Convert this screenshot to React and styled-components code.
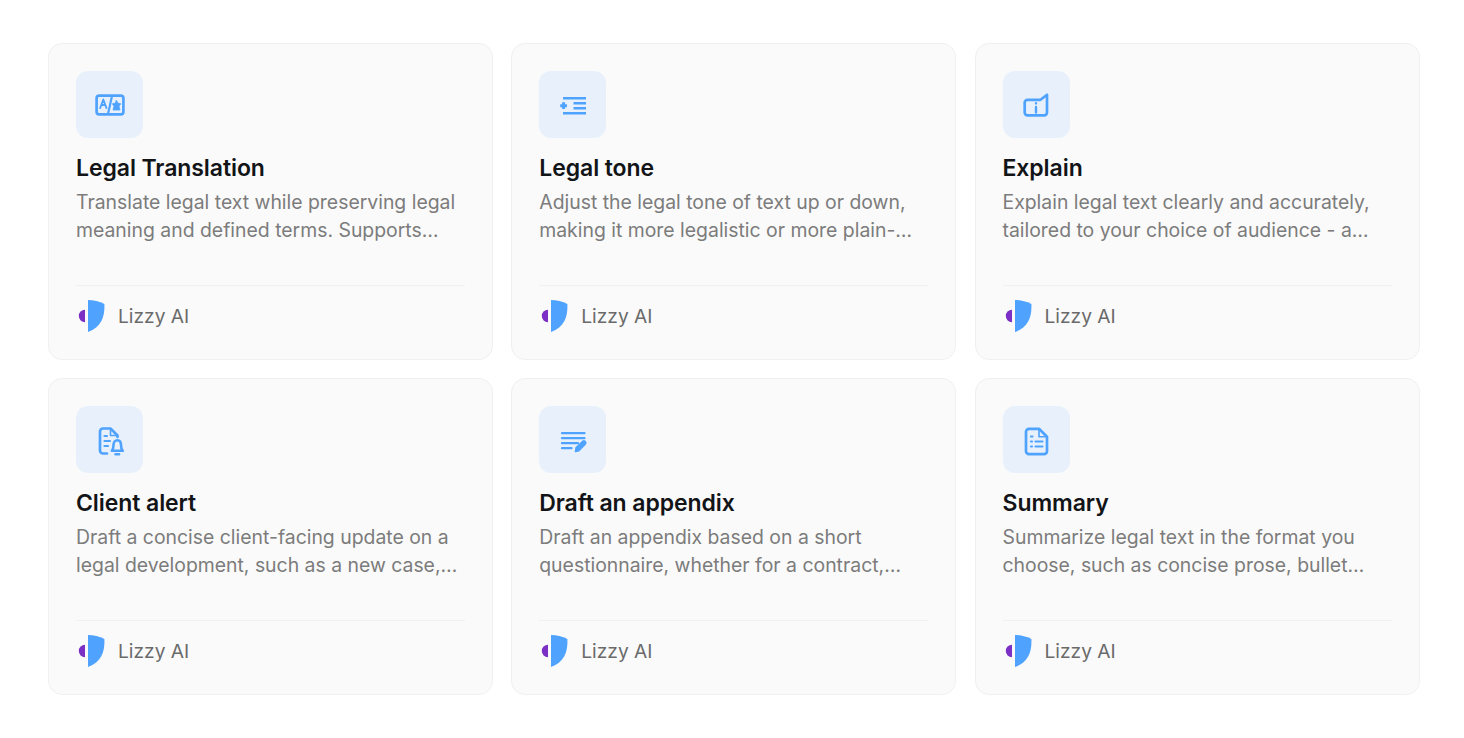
import React from 'react';
import styled, { createGlobalStyle } from 'styled-components';

const GlobalStyle = createGlobalStyle`
  body {
    margin: 0;
    background: #fff;
    font-family: Inter, "Liberation Sans", sans-serif;
  }
`;

const Grid = styled.div`
  display: grid;
  grid-template-columns: repeat(3, 1fr);
  grid-auto-rows: 317px;
  gap: 18px 18.25px;
  padding: 43px 44.5px 0 48px;
`;

const Card = styled.div`
  display: flex;
  flex-direction: column;
  box-sizing: border-box;
  padding: 27px 27px 0;
  background: #fafafa;
  border: 1px solid #f0f0f0;
  border-radius: 14px;
`;

const IconBox = styled.div`
  display: flex;
  align-items: center;
  justify-content: center;
  width: 67px;
  height: 67px;
  background: #e8f1fb;
  border-radius: 12px;
`;

const Title = styled.div`
  margin-top: 16px;
  font-size: 23px;
  line-height: 28px;
  font-weight: 600;
  letter-spacing: -0.08px;
  color: #121417;
`;

const Description = styled.div`
  margin-top: 6px;
  height: 56px;
  font-size: 19.4px;
  line-height: 28px;
  color: #7c7c7c;
`;

const Footer = styled.div`
  display: flex;
  align-items: center;
  gap: 13px;
  margin-top: 41px;
  padding-top: 13px;
  border-top: 1px solid #f1f1f1;
`;

const Author = styled.span`
  font-size: 19.2px;
  line-height: 32px;
  color: #6a6a6a;
`;

const Glyph = styled.svg.attrs((props) => ({
  viewBox: '0 0 32 32',
  fill: 'none',
  strokeWidth: props.$weight || 2.7,
}))`
  width: 32px;
  height: 32px;
  stroke: #4fa3ff;
  stroke-linecap: round;
  stroke-linejoin: round;
`;

const Logo = () => (
  <svg width="29" height="34" viewBox="0 0 29 34">
    <path d="M9 10.8A6.2 6.2 0 0 0 9 23.2Z" fill="#7b2fc4" />
    <path d="M12 1C17.5 1 23.5 2.4 28.4 5C29 18 25 28.5 12 33Z" fill="#4fa3ff" />
  </svg>
);

const TranslateIcon = () => (
  <Glyph>
    <rect x="2.6" y="6.6" width="26.8" height="18.8" rx="2.6" />
    <path d="M18 7L14 25" strokeWidth="2.2" />
    <path d="M6.2 19L9.3 10.5L12.4 19M7.4 16H11.2" strokeWidth="1.9" />
    <path d="M22.5 11.5L24 14.2L26.8 14.8L25 17.2L26 21H19L20 17.2L18.3 14.8L21 14.2Z" fill="#4fa3ff" strokeWidth="0.8" />
  </Glyph>
);

const ToneIcon = () => (
  <Glyph $weight={2.4}>
    <path d="M6 9.2H29M16.5 14.2H29M16.5 19.2H29M6 24.2H29" strokeLinecap="butt" />
    <path d="M3.2 16.7H10M6.6 13.3V20.1" strokeWidth="3" strokeLinecap="butt" />
  </Glyph>
);

const ExplainIcon = () => (
  <Glyph>
    <path d="M7.5 10.8H20.5L27 5.8V23.5A2.8 2.8 0 0 1 24.2 26.3H7.5A2.8 2.8 0 0 1 4.7 23.5V13.6A2.8 2.8 0 0 1 7.5 10.8Z" />
    <path d="M16 18V23.5M16 14.3V14.4" strokeWidth="2.4" />
  </Glyph>
);

const AlertIcon = () => (
  <Glyph>
    <path d="M13 29.5H9A3 3 0 0 1 6 26.5V7.5A3 3 0 0 1 9 4.5H16.5L23.5 11.5V13" />
    <path d="M16.5 5V11.5H23" strokeWidth="1.6" />
    <path d="M10.5 12H13M10.5 17H16M10.5 22H14" strokeWidth="2.2" />
    <path d="M17.8 26.8C19.5 25 19.5 23.5 19.5 21C19.5 18 21.2 16.2 23.3 16.2C25.4 16.2 27 18 27 21C27 23.5 27 25 28.8 26.8Z" strokeWidth="2.6" />
    <path d="M21.6 30.3H25" strokeWidth="2.6" />
  </Glyph>
);

const DraftIcon = () => (
  <Glyph>
    <path d="M5 9.2H27.5M5 14.2H27.5M5 19.2H21M5 24.2H14.5" strokeWidth="2.3" />
    <path d="M18.5 27.5L19 23.8L25.5 17.5C26.4 16.7 27.4 16.7 28.2 17.5C29 18.3 29 19.3 28.2 20.1L21.8 26.7Z" fill="#4fa3ff" strokeWidth="1.6" />
  </Glyph>
);

const SummaryIcon = () => (
  <Glyph>
    <path d="M9 4.8H19L27 12.8V27.2A3 3 0 0 1 24 30.2H9A3 3 0 0 1 6 27.2V7.8A3 3 0 0 1 9 4.8Z" />
    <path d="M19 5V12.8H26.8" strokeWidth="1.6" />
    <path d="M11 12.5H12.5M11 17.5H12M11 22.5H12M15.5 17.5H22.5M15.5 22.5H22.5" strokeWidth="2.2" />
  </Glyph>
);

const cards = [
  {
    id: 'translation',
    icon: <TranslateIcon />,
    title: 'Legal Translation',
    text: 'Translate legal text while preserving legal meaning and defined terms. Supports…',
  },
  {
    id: 'tone',
    icon: <ToneIcon />,
    title: 'Legal tone',
    text: 'Adjust the legal tone of text up or down, making it more legalistic or more plain-…',
  },
  {
    id: 'explain',
    icon: <ExplainIcon />,
    title: 'Explain',
    text: 'Explain legal text clearly and accurately, tailored to your choice of audience - a…',
  },
  {
    id: 'alert',
    icon: <AlertIcon />,
    title: 'Client alert',
    text: 'Draft a concise client-facing update on a legal development, such as a new case,…',
  },
  {
    id: 'appendix',
    icon: <DraftIcon />,
    title: 'Draft an appendix',
    text: 'Draft an appendix based on a short questionnaire, whether for a contract,…',
  },
  {
    id: 'summary',
    icon: <SummaryIcon />,
    title: 'Summary',
    text: 'Summarize legal text in the format you choose, such as concise prose, bullet…',
  },
];

const App = () => (
  <>
    <GlobalStyle />
    <Grid>
      {cards.map((card) => (
        <Card key={card.id}>
          <IconBox>{card.icon}</IconBox>
          <Title>{card.title}</Title>
          <Description>{card.text}</Description>
          <Footer>
            <Logo />
            <Author>Lizzy AI</Author>
          </Footer>
        </Card>
      ))}
    </Grid>
  </>
);

export default App;
